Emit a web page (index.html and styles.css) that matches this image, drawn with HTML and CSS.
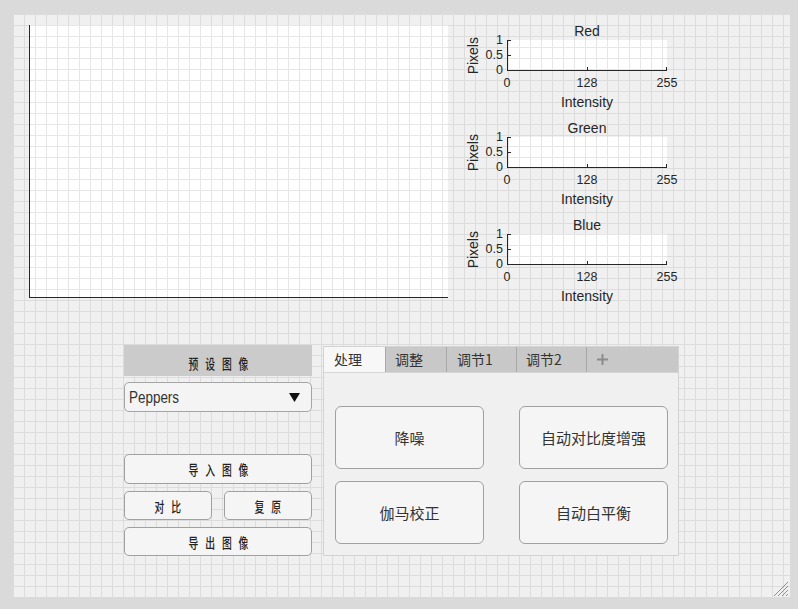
FILE: index.html
```html
<!DOCTYPE html>
<html lang="zh">
<head>
<meta charset="utf-8">
<title>App Designer</title>
<link rel="stylesheet" href="styles.css">
</head>
<body>
<div class="canvas">
  <div class="top">
    <div class="axes gridwhite"></div>
    <div class="hists">
      <div class="hist">
        <div class="hist-title">Red</div>
        <div class="hist-body">
          <div class="ylabel"><span>Pixels</span></div>
          <div class="yticks"><span>1</span><span>0.5</span><span>0</span></div>
          <div class="plot gridwhite"><div class="ticks"></div></div>
        </div>
        <div class="xticks"><span>0</span><span>128</span><span>255</span></div>
        <div class="xlabel">Intensity</div>
      </div>
      <div class="hist">
        <div class="hist-title">Green</div>
        <div class="hist-body">
          <div class="ylabel"><span>Pixels</span></div>
          <div class="yticks"><span>1</span><span>0.5</span><span>0</span></div>
          <div class="plot gridwhite"><div class="ticks"></div></div>
        </div>
        <div class="xticks"><span>0</span><span>128</span><span>255</span></div>
        <div class="xlabel">Intensity</div>
      </div>
      <div class="hist">
        <div class="hist-title">Blue</div>
        <div class="hist-body">
          <div class="ylabel"><span>Pixels</span></div>
          <div class="yticks"><span>1</span><span>0.5</span><span>0</span></div>
          <div class="plot gridwhite"><div class="ticks"></div></div>
        </div>
        <div class="xticks"><span>0</span><span>128</span><span>255</span></div>
        <div class="xlabel">Intensity</div>
      </div>
    </div>
  </div>

  <div class="bottom">
    <div class="side">
      <div class="side-label"><span class="sp">预设图像</span></div>
      <div class="dropdown">
        <span class="dd-text">Peppers</span>
        <svg class="caret" width="11" height="9" viewBox="0 0 11 9"><polygon points="0,0 11,0 5.5,9" fill="#111"/></svg>
      </div>
      <button class="btn btn-import"><span class="sp">导入图像</span></button>
      <div class="pair">
        <button class="btn btn-half"><span class="sp">对比</span></button>
        <button class="btn btn-half"><span class="sp">复原</span></button>
      </div>
      <button class="btn btn-export"><span class="sp">导出图像</span></button>
    </div>

    <div class="tabgroup">
      <div class="tabbar">
        <div class="tab sel t1">处理</div>
        <div class="tab t2">调整</div>
        <div class="tab t3">调节1</div>
        <div class="tab t4">调节2</div>
        <div class="plus">
          <svg width="11" height="11" viewBox="0 0 11 11"><path d="M5.5 0V11M0 5.5H11" stroke="#8c8c8c" stroke-width="2"/></svg>
        </div>
      </div>
      <div class="tabbody">
        <button class="tbtn">降噪</button>
        <button class="tbtn">自动对比度增强</button>
        <button class="tbtn">伽马校正</button>
        <button class="tbtn">自动白平衡</button>
      </div>
    </div>
  </div>

  <svg class="grip" width="16" height="16" viewBox="0 0 16 16">
    <path d="M15 1L1 15M15 5L5 15M15 9L9 15M15 13L13 15" stroke="#8f8f8f" stroke-width="1"/>
  </svg>
</div>
</body>
</html>
```

FILE: styles.css
```css
* { box-sizing: border-box; }

html, body { margin: 0; padding: 0; }

body {
  background: #dadada;
  width: 798px;
  height: 609px;
  overflow: hidden;
  font-family: "Liberation Sans", Arial, sans-serif;
  color: #262626;
}

.canvas {
  position: relative;
  margin: 14px 0 0 13px;
  width: 777px;
  height: 583px;
  background-color: #f0f0f0;
  background-image:
    linear-gradient(to right, transparent 10px, #dcdcdc 10px, #dcdcdc 11px, transparent 11px),
    linear-gradient(to bottom, transparent 10px, #dcdcdc 10px, #dcdcdc 11px, transparent 11px);
  background-size: 11px 11px;
  background-position: -8px -7px;
  background-attachment: fixed;
}

.gridwhite {
  background-color: #ffffff;
  background-image:
    linear-gradient(to right, transparent 10px, #e6e6e6 10px, #e6e6e6 11px, transparent 11px),
    linear-gradient(to bottom, transparent 10px, #e6e6e6 10px, #e6e6e6 11px, transparent 11px);
  background-size: 11px 11px;
  background-position: -8px -7px;
  background-attachment: fixed;
}

/* ---------- top row ---------- */
.top {
  display: flex;
  align-items: flex-start;
  height: 331px;
  padding: 9px 0 0 16px;
}

.axes {
  margin-top: 2px;
  width: 419px;
  height: 273px;
  border-left: 1px solid #262626;
  border-bottom: 1px solid #262626;
}

.hists {
  margin-left: 18px;
  width: 225px;
  color: #262626;
}

.hist + .hist { margin-top: 10px; }

.hist-title {
  margin-left: 41px;
  width: 160px;
  text-align: center;
  font-size: 14px;
  line-height: 16px;
}

.hist-body {
  display: flex;
  margin-top: 1px;
  height: 31px;
}

.ylabel {
  width: 15px;
  height: 31px;
  display: flex;
  align-items: center;
  justify-content: center;
  font-size: 14px;
}

.ylabel span {
  writing-mode: vertical-rl;
  transform: rotate(180deg);
  line-height: 15px;
  white-space: nowrap;
}

.yticks {
  width: 22px;
  height: 45px;
  margin: -7px 0;
  display: flex;
  flex-direction: column;
  justify-content: space-between;
  align-items: flex-end;
  font-size: 12.5px;
  line-height: 15px;
}

.plot {
  margin-left: 4px;
  width: 160px;
  height: 31px;
  border-left: 1px solid #262626;
  border-bottom: 1px solid #262626;
}

.ticks {
  width: 100%;
  height: 100%;
  background:
    linear-gradient(#262626, #262626) left 0 top 0 / 3px 1px no-repeat,
    linear-gradient(#262626, #262626) left 0 top 15px / 3px 1px no-repeat,
    linear-gradient(#262626, #262626) left 79px bottom 0 / 1px 3px no-repeat,
    linear-gradient(#262626, #262626) right 0 bottom 0 / 1px 3px no-repeat;
}

.xticks {
  display: flex;
  justify-content: space-between;
  margin: 5px 0 0 29px;
  width: 184px;
  font-size: 12.5px;
  line-height: 15px;
}

.xticks span {
  width: 24px;
  text-align: center;
}

.xlabel {
  margin: 3px 0 0 41px;
  width: 160px;
  text-align: center;
  font-size: 14px;
  line-height: 16px;
}

/* ---------- bottom row ---------- */
.bottom {
  display: flex;
  align-items: flex-start;
  padding-left: 111px;
}

.side {
  width: 188px;
  display: flex;
  flex-direction: column;
}

.sp {
  display: inline-block;
  font-family: "Noto Sans CJK SC", sans-serif;
  font-size: 14px;
  font-weight: 500;
  line-height: 1;
  letter-spacing: 9.8px;
  padding-left: 9.8px;
  transform: scaleX(0.7);
  color: #222222;
  white-space: nowrap;
}

.side-label {
  height: 31px;
  background: #cbcbcb;
  display: flex;
  align-items: center;
  justify-content: center;
  padding-top: 4px;
}

.dropdown {
  margin-top: 6px;
  height: 30px;
  border: 1px solid #a5a5a5;
  border-radius: 5px;
  background: #f4f4f4;
  display: flex;
  align-items: center;
  justify-content: space-between;
  padding: 0 11px 0 4px;
}

.dd-text {
  display: inline-block;
  font-family: "Liberation Sans", Arial, sans-serif;
  font-size: 16px;
  color: #333333;
  padding-top: 1px;
  transform: scaleX(0.84);
  transform-origin: left center;
}

.caret { display: block; margin-top: 1px; }

.btn {
  margin: 0;
  padding: 0;
  border: 1px solid #a0a0a0;
  border-radius: 5px;
  background: #f5f5f5;
  display: flex;
  align-items: center;
  justify-content: center;
  font: inherit;
}

.btn-import { margin-top: 42px; height: 30px; }

.pair {
  margin-top: 7px;
  display: flex;
  justify-content: space-between;
}

.btn-half { width: 88px; height: 29px; }

.btn-export { margin-top: 7px; height: 29px; }

/* ---------- tab group ---------- */
.tabgroup {
  margin: 1px 0 0 11px;
  width: 356px;
  height: 210px;
  border: 1px solid #d3d3d3;
  background: #f0f0f0;
  display: flex;
  flex-direction: column;
}

.tabbar {
  display: flex;
  height: 26px;
  flex: none;
  background: #c8c8c8;
  border-bottom: 1px solid #d6d6d6;
}

.tab {
  height: 100%;
  border-right: 1px solid #a8a8a8;
  font-family: "Noto Sans CJK SC", sans-serif;
  font-size: 14px;
  line-height: 25px;
  padding-left: 10px;
  color: #333333;
}

.tab.sel { background: #f7f7f7; }
.t1 { width: 62px; }
.t2 { width: 61px; padding-left: 9px; }
.t3 { width: 70px; }
.t4 { width: 70px; padding-left: 9px; }

.plus {
  flex: 1;
  display: flex;
  align-items: center;
  padding-left: 10px;
}

.plus svg { display: block; }

.tabbody {
  flex: 1;
  display: grid;
  grid-template-columns: 149px 149px;
  grid-template-rows: 63px 63px;
  justify-content: space-between;
  row-gap: 12px;
  padding: 33px 10px 0 11px;
}

.tbtn {
  margin: 0;
  padding: 0;
  border: 1px solid #a0a0a0;
  border-radius: 6px;
  background: #f5f5f5;
  font-family: "Noto Sans CJK SC", sans-serif;
  font-size: 15px;
  color: #333333;
}

.grip {
  position: absolute;
  right: 1px;
  bottom: 0;
}
```
